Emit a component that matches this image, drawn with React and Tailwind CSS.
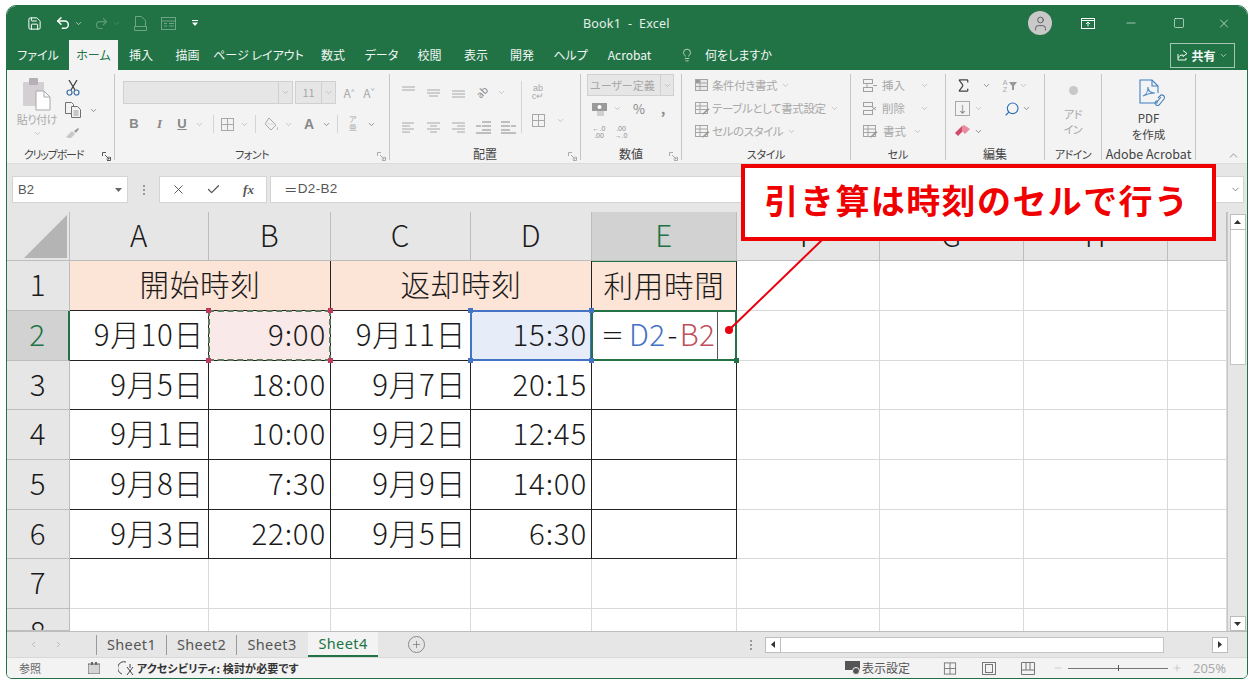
import React from "react";
import clsx from "clsx";
import {
  Save,
  Undo2,
  Redo2,
  ChevronDown,
  ChevronUp,
  Lightbulb,
  X,
  Check,
  Minus,
  Square,
  Search,
  Sigma,
  User,
  ChevronLeft,
  ChevronRight,
  Plus,
} from "lucide-react";

const jp = "font-['Noto_Sans_CJK_JP','Noto_Sans',sans-serif]";
const palt = "[font-feature-settings:'palt']";

const Chev = ({ className }) => (
  <ChevronDown size={9} strokeWidth={1.6} className={clsx("shrink-0", className)} />
);

// small ribbon drawings
const Lines = ({ rows, className }) => (
  <svg width="16" height="14" viewBox="0 0 16 14" stroke="currentColor" fill="none" className={className}>
    {rows.map(([x1, x2, y], i) => (
      <path key={i} d={`M${x1} ${y}H${x2}`} />
    ))}
  </svg>
);

const Paste = () => (
  <svg width="28" height="33" viewBox="0 0 28 33">
    <rect x="0" y="4" width="21" height="24" rx="1" fill="#d3cfd3" />
    <rect x="6" y="0" width="9" height="7" rx="1" fill="#b5b0b5" />
    <path d="M13 13h8l6 6v13H13z" fill="#fff" stroke="#a8a8a8" />
    <path d="M21 13v6h6" fill="none" stroke="#a8a8a8" />
  </svg>
);

const Cut = () => (
  <svg width="14" height="16" viewBox="0 0 14 16" fill="none">
    <path d="M3 0l6 10M11 0L5 10" stroke="#444" strokeWidth="1.300" />
    <circle cx="3.500" cy="12.500" r="2.500" stroke="#3a6ea5" strokeWidth="1.200" />
    <circle cx="10.500" cy="12.500" r="2.500" stroke="#3a6ea5" strokeWidth="1.200" />
  </svg>
);

const CopyDocs = () => (
  <svg width="16" height="16" viewBox="0 0 16 16" fill="#f3f3f3" stroke="#707070">
    <path d="M.5 .5h6l2 2v9h-8z" />
    <path d="M6.500 4.500h6l3 3v8h-9z" />
    <path d="M8.500 9h5M8.500 11h5M8.500 13h5" stroke="#9a9a9a" />
  </svg>
);

const Brush = () => (
  <svg width="14" height="12" viewBox="0 0 14 12">
    <path d="M0 10l6-6 3 3-4 4H2z" fill="#c8c8c8" />
    <path d="M8 4l4-3 1 1-3 4z" fill="#9a9a9a" />
  </svg>
);

const TableIcon = ({ className }) => (
  <svg width="15" height="15" viewBox="0 0 15 15" fill="none" stroke="currentColor" className={className}>
    <rect x="1.500" y="1.500" width="12" height="12" />
    <path d="M7.500 1.500v12M1.500 7.500h12" />
  </svg>
);

const Bucket = () => (
  <svg width="16" height="15" viewBox="0 0 16 15" fill="none" stroke="#a8a8a8">
    <path d="M6 1l7 7-5 5-6-6z" />
    <path d="M2 7h11" stroke="#d8d8d8" />
    <path d="M14.500 10v3" stroke="#c4c4c4" />
  </svg>
);

const Sheetish = ({ cross }) => (
  <svg width="15" height="15" viewBox="0 0 15 15" fill="none" stroke="#a0a0a0">
    <rect x="1.500" y="1.500" width="9" height="4" />
    <rect x="1.500" y="9.500" width="9" height="4" />
    <path d={cross ? "M10 6l4 3m0-3l-4 3" : "M5 5.500v4M11 7.500h4"} />
  </svg>
);

const StyleIcon = ({ kind }) => (
  <svg width="16" height="15" viewBox="0 0 16 15" fill="none" stroke="#a4a4a4">
    <rect x="1.500" y="1.500" width="12" height="11" fill={kind === 0 ? "#e8e8e8" : "#f3f3f3"} />
    <path d="M1.500 5h12M1.500 8.500h12M6 1.500v11" />
    {kind > 0 && <path d="M8 13l6-6 1.500 1.500-6 5z" fill="#9a9a9a" stroke="none" />}
    {kind === 0 && <rect x="2" y="2" width="4" height="3" fill="#9a9a9a" stroke="none" />}
  </svg>
);

const PdfIcon = () => (
  <svg width="28" height="29" viewBox="0 0 28 29" fill="none" stroke="#3f7fc4" strokeWidth="1.100">
    <path d="M19 21v3H2V1h12l6 6v7" />
    <path d="M14 1v6h6" />
    <path d="M5 17c3-1 5-5 5-9 0 4 2 6 7 6-4 0-8 1-12 3z" stroke="#5a8fc8" />
    <path d="M18 22l-1 2a2.500 2.500 0 0 0 4 2l5-6a2.500 2.500 0 0 0-4-3l-2 2" stroke="#4a7fb8" />
    <path d="M19 23l4-5" stroke="#4a7fb8" />
  </svg>
);

const RowIcon = ({ children, className }) => (
  <div className={clsx("flex items-center justify-center shrink-0", className)}>{children}</div>
);

const Launcher = ({ dark }) => (
  <svg width="9" height="9" viewBox="0 0 9 9" fill="none" stroke={dark ? "#555" : "#aaa"} className="absolute right-[3px] top-[4px]">
    <path d="M0.500 4V0.500H4M8.500 5v3.500H5M3 3l4 4M7 4.500V7H4.500" />
  </svg>
);

const Group = ({ label, launcher, dark, className, labelClass, children }) => (
  <div className={clsx("flex flex-col h-[86px] border-r border-[#c6c6c6] shrink-0", className)}>
    <div className="h-[74px] shrink-0">{children}</div>
    <div className={clsx("relative h-[16px] flex items-center justify-center leading-none text-[#444] whitespace-nowrap", palt, labelClass)}>
      {label}
      {launcher && <Launcher dark={dark} />}
    </div>
  </div>
);

const tabs = [
  { t: "ファイル", w: "w-[62px]" },
  { t: "ホーム", w: "w-[49px]", active: true },
  { t: "挿入", w: "w-[46px]" },
  { t: "描画", w: "w-[47px]" },
  { t: "ページ レイアウト", w: "w-[95px]" },
  { t: "数式", w: "w-[54px]" },
  { t: "データ", w: "w-[43px]" },
  { t: "校閲", w: "w-[53px]" },
  { t: "表示", w: "w-[40px]" },
  { t: "開発", w: "w-[52px]" },
  { t: "ヘルプ", w: "w-[45px]" },
  { t: "Acrobat", w: "w-[73px]" },
];

const TitleBar = () => (
  <div className="relative h-[34px] shrink-0 flex items-center bg-[#217346] text-white">
    <RowIcon className="w-[21px] ml-[17px]"><Save size={15} strokeWidth={1.6} /></RowIcon>
    <RowIcon className="w-[20px] ml-[8px]"><Undo2 size={16} strokeWidth={2.2} /></RowIcon>
    <RowIcon className="w-[10px]"><Chev /></RowIcon>
    <RowIcon className="w-[18px] ml-[9px] text-[#5d9a78]"><Redo2 size={15} strokeWidth={1.8} /></RowIcon>
    <RowIcon className="w-[10px] ml-[1px] text-[#5d9a78]"><Chev /></RowIcon>
    <RowIcon className="w-[16px] ml-[11px] text-[#6ea586]">
      <svg width="13" height="15" viewBox="0 0 13 15" fill="none" stroke="currentColor"><path d="M1.500 10V.5h6l4 4V10M.5 10.500h12v4H.5z" /></svg>
    </RowIcon>
    <RowIcon className="w-[16px] ml-[12px] text-[#6ea586]">
      <svg width="15" height="13" viewBox="0 0 15 13" fill="none" stroke="currentColor"><rect x=".5" y=".5" width="14" height="12" /><path d="M.5 4h14M3 6.500h3M8 6.500h5M3 9h3M8 9h5" /></svg>
    </RowIcon>
    <RowIcon className="w-[6px] ml-[16px]">
      <svg width="6" height="6" viewBox="0 0 6 6" fill="currentColor"><path d="M0 0h6v1H0zM0 2.500h6L3 6z" /></svg>
    </RowIcon>
    <div className="absolute left-[576px] top-[12px] text-[12.500px] leading-none tracking-[0.2px] text-[#e4efe9] font-['Noto_Sans',sans-serif] whitespace-pre">Book1  -  Excel</div>
    <div className="ml-auto flex items-center">
      <div className="w-[24px] h-[24px] rounded-full bg-[#c9c9c9] flex items-center justify-center text-[#555]"><User size={17} strokeWidth={1.3} /></div>
      <RowIcon className="w-[14px] ml-[29px]">
        <svg width="14" height="11" viewBox="0 0 14 11" fill="none" stroke="currentColor"><rect x=".5" y=".5" width="13" height="10" /><path d="M.5 2.500h13" /><path d="M7 8.500V4M5 6l2-2 2 2" /></svg>
      </RowIcon>
      <RowIcon className="w-[14px] ml-[29px]"><Minus size={14} strokeWidth={1} /></RowIcon>
      <RowIcon className="w-[12px] ml-[35px]"><Square size={12} strokeWidth={1.2} /></RowIcon>
      <RowIcon className="w-[14px] ml-[32px] mr-[16px]"><X size={15} strokeWidth={1.1} /></RowIcon>
    </div>
  </div>
);

const TabBar = () => (
  <div className={clsx("h-[30px] shrink-0 flex items-stretch bg-[#217346] text-[#f2f7f4] text-[12px] leading-none", jp, palt)}>
    {tabs.map((tab) => (
      <div
        key={tab.t}
        className={clsx(
          "flex items-center justify-center shrink-0 whitespace-nowrap",
          tab.w,
          tab.active && "bg-[#f3f3f3] text-[#217346]"
        )}
      >
        {tab.t}
      </div>
    ))}
    <RowIcon className="w-[14px] ml-[14px]"><Lightbulb size={16} strokeWidth={1.2} /></RowIcon>
    <div className="ml-[11px] flex items-center whitespace-nowrap">何をしますか</div>
    <div className="ml-auto mr-[12px] mt-[3px] mb-[2px] w-[65px] border border-[#a7c7b5] flex items-center justify-center gap-[3px] font-bold">
      <svg width="11" height="11" viewBox="0 0 11 11" fill="none" stroke="currentColor"><path d="M6 .5l4 3-4 3V5C3 5 2 6 1.500 8M1 4v6h8V8" /></svg>
      <span>共有</span>
      <Chev />
    </div>
  </div>
);

const Ribbon = () => (
  <div className={clsx("h-[93px] shrink-0 pt-[4px] flex bg-[#f3f3f3] text-[#a8a8a8]", jp)}>
    <Group label="クリップボード" launcher dark className="w-[108px]" labelClass="text-[11px] tracking-[-1.200px] pr-[14px]">
      <div className="flex">
        <div className="w-[56px] pl-[4px] pt-[4px] flex flex-col items-center">
          <Paste />
          <div className={clsx("mt-[1px] text-[11px] leading-[14px] tracking-[-0.4px] text-[#aaa]", palt)}>貼り付け</div>
          <Chev className="mt-[3px]" />
        </div>
        <div className="flex flex-col">
          <RowIcon className="w-[20px] h-[25px] pt-[3px]"><Cut /></RowIcon>
          <div className="flex items-center h-[22px]">
            <RowIcon className="w-[20px]"><CopyDocs /></RowIcon>
            <Chev className="ml-[6px] text-[#555]" />
          </div>
          <RowIcon className="w-[20px] h-[24px]"><Brush /></RowIcon>
        </div>
      </div>
    </Group>

    <Group label="フォント" launcher className="w-[275px]" labelClass="text-[11px] tracking-[-0.5px]">
      <div className="pt-[7px] pl-[8px]">
        <div className="flex items-center h-[23px]">
          <div className="w-[156px] h-[23px] bg-[#e6e6e6] border border-[#d0d0d0]" />
          <div className="w-[14px] h-[23px] bg-[#e6e6e6] border border-[#d0d0d0] border-l-0 flex items-center justify-center"><Chev /></div>
          <div className="w-[27px] h-[23px] ml-[2px] bg-[#e6e6e6] border border-[#d0d0d0] text-[11px] flex items-center justify-center">11</div>
          <div className="w-[14px] h-[23px] bg-[#e6e6e6] border border-[#d0d0d0] border-l-0 flex items-center justify-center"><Chev /></div>
          <div className="ml-[3px] w-[20px] text-center text-[12px]">A<sup className="text-[7px]">^</sup></div>
          <div className="w-[20px] text-center text-[12px]">A<sup className="text-[7px]">ˇ</sup></div>
        </div>
        <div className="mt-[8px] flex items-center h-[24px] font-['Liberation_Sans',sans-serif] text-[13px] font-bold">
          <div className="w-[20px] ml-[1px] text-center text-[#888]">B</div>
          <div className="w-[25px] ml-[3px] text-center italic font-['Liberation_Serif',serif] text-[#888]">I</div>
          <div className="w-[20px] text-center underline text-[#888]">U</div>
          <Chev className="ml-[3px]" />
          <div className="ml-[9px] w-px h-[18px] bg-[#d4d4d4]" />
          <RowIcon className="w-[20px] ml-[3px]"><TableIcon /></RowIcon>
          <Chev className="ml-[3px]" />
          <div className="ml-[6px] w-px h-[18px] bg-[#d4d4d4]" />
          <RowIcon className="w-[18px] ml-[6px]"><Bucket /></RowIcon>
          <Chev className="ml-[4px]" />
          <div className="w-[16px] ml-[8px] text-center text-[14px] text-[#888]">A</div>
          <Chev className="ml-[5px] text-[#555]" />
          <div className="ml-[6px] w-px h-[18px] bg-[#d4d4d4]" />
          <div className="w-[20px] ml-[5px] text-center text-[8px] leading-[8px] font-normal">ア<br />亜</div>
          <Chev className="ml-[4px] text-[#555]" />
        </div>
      </div>
    </Group>

    <Group label="配置" launcher className="w-[191px]" labelClass="text-[12px]">
      <div className="pt-[7px] flex">
        <div className="w-[131px] pl-[11px]">
          <div className="flex items-center h-[22px] gap-[9px]">
            <Lines rows={[[1, 14, 2], [1, 14, 5]]} />
            <Lines rows={[[1, 14, 5], [1, 14, 8], [3, 12, 11]]} />
            <Lines rows={[[1, 14, 6], [1, 14, 9], [1, 14, 12]]} />
            <div className="-rotate-45 text-[10px] leading-none text-[#888]">ab</div>
            <Chev />
          </div>
          <div className="mt-[12px] flex items-center h-[24px] gap-[9px]">
            <Lines rows={[[1, 13, 3], [1, 9, 6], [1, 13, 9], [1, 9, 12]]} />
            <Lines rows={[[1, 14, 3], [4, 11, 6], [1, 14, 9], [4, 11, 12]]} />
            <Lines rows={[[1, 14, 3], [6, 14, 6], [1, 14, 9], [6, 14, 12]]} />
            <Lines className="text-[#8a8a8a]" rows={[[6, 15, 2], [6, 15, 6], [6, 15, 10], [0, 5, 6], [0, 15, 13]]} />
            <Lines className="text-[#8a8a8a]" rows={[[0, 9, 2], [0, 9, 6], [0, 9, 10], [10, 15, 6], [0, 15, 13]]} />
          </div>
        </div>
        <div className="border-l border-[#d4d4d4] h-[52px] pl-[6px] pt-[3px]">
          <div className="w-[20px] text-center text-[9px] leading-[8px] font-['Liberation_Sans',sans-serif]">ab<br />c↵</div>
          <div className="mt-[13px] flex items-center gap-[8px]">
            <RowIcon className="w-[20px]"><TableIcon /></RowIcon>
            <Chev />
          </div>
        </div>
      </div>
    </Group>

    <Group label="数値" launcher className="w-[101px]" labelClass="text-[12px]">
      <div className="pl-[6px]">
        <div className="flex h-[22px] w-[87px] bg-[#e6e6e6] border border-[#d0d0d0]">
          <div className={clsx("flex-1 pl-[2px] text-[11px] leading-[20px] text-[#a8a8a8]", palt)}>ユーザー定義</div>
          <div className="w-[13px] border-l border-[#d0d0d0] flex items-center justify-center"><Chev /></div>
        </div>
        <div className="mt-[1px] flex items-center h-[23px]">
          <RowIcon className="w-[18px] ml-[3px]">
            <svg width="15" height="14" viewBox="0 0 15 14"><rect x="0" y="1" width="15" height="8" fill="#9a9a9a" /><circle cx="7.500" cy="5" r="2" fill="#fff" /><rect x="5" y="9" width="7" height="5" fill="#d0d0d0" /></svg>
          </RowIcon>
          <Chev className="ml-[5px]" />
          <div className="w-[20px] ml-[7px] text-center text-[13px] text-[#888] leading-none">%</div>
          <div className="w-[14px] ml-[7px] text-center text-[13px] font-bold text-[#888] leading-none">,</div>
        </div>
        <div className="flex items-center h-[23px] text-[7px] leading-[7px] font-['Liberation_Sans',sans-serif] text-[#8a8a8a]">
          <div className="w-[18px] ml-[3px] text-center">←.0<br />.00</div>
          <div className="w-[20px] ml-[3px] text-center">.00<br />→.0</div>
        </div>
      </div>
    </Group>

    <Group label="スタイル" className="w-[169px]" labelClass="text-[11px] tracking-[-0.3px]">
      <div className={clsx("pl-[12px] text-[11.500px] tracking-[-0.4px] leading-none", palt)}>
        {["条件付き書式", "テーブルとして書式設定", "セルのスタイル"].map((t, i) => (
          <div key={t} className="flex items-center h-[23px] whitespace-nowrap">
            <StyleIcon kind={i} />
            <span className="ml-[2px]">{t}</span>
            <Chev className="ml-[4px]" />
          </div>
        ))}
      </div>
    </Group>

    <Group label="セル" className="w-[95px]" labelClass="text-[11px]">
      <div className={clsx("pl-[11px] text-[11.500px] leading-none", palt)}>
        {["挿入", "削除", "書式"].map((t, i) => (
          <div key={t} className="flex items-center h-[23px] whitespace-nowrap">
            {i < 2 ? <Sheetish cross={i === 1} /> : <StyleIcon kind={1} />}
            <span className="ml-[5px] w-[28px]">{t}</span>
            <Chev className={i < 2 ? "ml-[10px]" : "ml-[2px]"} />
          </div>
        ))}
      </div>
    </Group>

    <Group label="編集" className="w-[99px]" labelClass="text-[12px]">
      <div className="pl-[9px]">
        <div className="flex items-center h-[23px]">
          <Sigma size={17} strokeWidth={1.7} className="text-[#444]" />
          <Chev className="ml-[10px] text-[#555]" />
          <div className="w-[8px] ml-[10px] text-center text-[7px] leading-[7px] font-['Liberation_Sans',sans-serif]">A<br />Z</div>
          <svg width="8" height="8" viewBox="0 0 8 8" className="fill-[#999]"><path d="M0 0h8L5 4v4H3V4z" /></svg>
          <Chev className="ml-[2px]" />
        </div>
        <div className="flex items-center h-[23px]">
          <RowIcon className="w-[15px] h-[15px] border border-[#a8a8a8] text-[#777] text-[10px] leading-none">↓</RowIcon>
          <Chev className="ml-[4px]" />
          <Search size={16} strokeWidth={1.7} className="ml-[21px] -scale-x-100 text-[#2f6fb5]" />
          <Chev className="ml-[2px] text-[#555]" />
        </div>
        <div className="flex items-center h-[23px]">
          <svg width="16" height="13" viewBox="0 0 16 13"><path d="M0 8l7-7 3 3-7 7z" fill="#d24a6a" /><path d="M7 1l2-1 6 4-5 5-3-3z" fill="#e88aa0" /></svg>
          <Chev className="ml-[3px] text-[#555]" />
        </div>
      </div>
    </Group>

    <Group label="アドイン" className="w-[57px]" labelClass="text-[11px] tracking-[-0.5px]">
      <div className={clsx("flex flex-col items-center text-[11px] leading-[15px] tracking-[-0.5px]", palt)}>
        <div className="mt-[12px] w-[9px] h-[9px] rounded-full bg-[#c8c8c8]" />
        <div className="mt-[12px]">アド</div>
        <div>イン</div>
      </div>
    </Group>

    <Group label="Adobe Acrobat" className="w-[94px]" labelClass="text-[12.500px]">
      <div className={clsx("flex flex-col items-center text-[11.500px] leading-[16px] text-[#444]", palt)}>
        <div className="mt-[5px] ml-[6px]"><PdfIcon /></div>
        <div className="mt-[2px]">PDF</div>
        <div>を作成</div>
      </div>
    </Group>

    <div className="flex-1 flex items-end justify-end pr-[7px] pb-[1px] text-[#666]">
      <ChevronUp size={13} strokeWidth={1.2} />
    </div>
  </div>
);

const FormulaBar = () => (
  <div className="h-[49px] shrink-0 pt-[12px] flex bg-[#e6e6e6] text-[#555] font-['Liberation_Sans',sans-serif] border-t border-[#dcdcdc]">
    <div className="ml-[5px] w-[116px] h-[27px] bg-white border border-[#d4d4d4] flex items-center pl-[5px] text-[13px]">
      B2
      <svg width="7" height="4" viewBox="0 0 7 4" className="ml-auto mr-[5px] fill-[#666]"><path d="M0 0h7L3.500 4z" /></svg>
    </div>
    <div className="w-[31px] h-[27px] flex flex-col items-center justify-center gap-[2px]">
      <div className="w-[2px] h-[2px] bg-[#999]" />
      <div className="w-[2px] h-[2px] bg-[#999]" />
      <div className="w-[2px] h-[2px] bg-[#999]" />
    </div>
    <div className="w-[108px] h-[27px] bg-white border border-[#d4d4d4] flex items-center">
      <RowIcon className="w-[36px]"><X size={15} strokeWidth={1.5} /></RowIcon>
      <RowIcon className="w-[35px]"><Check size={15} strokeWidth={2} /></RowIcon>
      <div className="w-[35px] text-center italic font-bold text-[13px] font-['Liberation_Serif',serif]">fx</div>
    </div>
    <div className="ml-[3px] flex-1 mr-[3px] h-[27px] bg-white border border-[#d4d4d4] flex items-center pl-[13px] text-[13.500px] tracking-[0.3px]">
      <span className={jp}>＝</span>D2-B2
      <ChevronDown size={11} strokeWidth={1.5} className="ml-auto mr-[2px]" />
    </div>
  </div>
);

const columns = ["A", "B", "C", "D", "E", "F", "G", "H", ""];

const dataRows = [
  ["9月10日", "9:00", "9月11日", "15:30"],
  ["9月5日", "18:00", "9月7日", "20:15"],
  ["9月1日", "10:00", "9月2日", "12:45"],
  ["9月8日", "7:30", "9月9日", "14:00"],
  ["9月3日", "22:00", "9月5日", "6:30"],
];

const black = "border-r border-b border-[#222]";
const pale = "border-r border-b border-[#d9d9d9]";
const headCell = "flex items-center justify-center bg-[#e6e6e6] border-r border-b border-[#bdbdbd] text-[#1a1a1a] leading-none pb-[3px]";
const peach = "flex items-center justify-center bg-[#fce4d6] text-[#1a1a1a] leading-none pb-[3px]";
const dataCell = "flex items-center justify-end pr-[4px] pb-[3px] text-[#1a1a1a] leading-none";

const Handles = ({ color }) =>
  ["-left-[3px] -top-[3px]", "-right-[3px] -top-[3px]", "-left-[3px] -bottom-[3px]", "-right-[3px] -bottom-[3px]"].map((pos) => (
    <div key={pos} className={clsx("absolute w-[5px] h-[5px] z-10", pos, color)} />
  ));

const Sheet = () => (
  <div className="h-[419px] shrink-0 flex bg-white">
    <div className={clsx("flex-1 grid grid-cols-[63px_139px_122px_140px_121px_145px_143px_144px_144px_59px] grid-rows-[49px_50px_50px_49px_50px_50px_49px_50px_22px] text-[29.500px] tracking-[0.8px] font-light", jp)}>
      <div className="bg-[#e6e6e6] border-r border-b border-[#bdbdbd] flex items-end justify-end p-[2px]">
        <div className="w-0 h-0 border-b-[43px] border-l-[43px] border-b-[#b4b4b4] border-l-transparent" />
      </div>
      {columns.map((c, i) => (
        <div key={i} className={clsx(headCell, c === "E" && "!bg-[#d2d2d2] !text-[#217346]")}>{c}</div>
      ))}

      <div className={headCell}>1</div>
      <div className={clsx(peach, "col-span-2", black)}>開始時刻</div>
      <div className={clsx(peach, "col-span-2", black)}>返却時刻</div>
      <div className={clsx(peach, black, "border-t border-t-[#217346]")}>利用時間</div>
      {[0, 1, 2, 3].map((i) => <div key={i} className={pale} />)}

      {dataRows.map((row, r) => (
        <React.Fragment key={r}>
          <div className={clsx(headCell, r === 0 && "!bg-[#d2d2d2] !text-[#217346] border-r-2 border-r-[#217346]")}>{r + 2}</div>
          {row.map((v, c) => {
            if (r === 0 && c === 1) {
              return (
                <div key={c} className={clsx(dataCell, black, "relative bg-[#f9e9e9]")}>
                  <div className="absolute -inset-px border-2 border-dashed border-[#5f7a5f]" />
                  <Handles color="bg-[#c0395a]" />
                  {v}
                </div>
              );
            }
            if (r === 0 && c === 3) {
              return (
                <div key={c} className={clsx(dataCell, black, "relative bg-[#e6edf9]")}>
                  <div className="absolute -inset-px border-2 border-[#4472c4]" />
                  <Handles color="bg-[#4472c4]" />
                  {v}
                </div>
              );
            }
            return <div key={c} className={clsx(dataCell, black)}>{v}</div>;
          })}
          {r === 0 ? (
            <div className="relative flex items-center pl-[9px] pb-[3px] leading-none text-[#1a1a1a] tracking-[0.4px] whitespace-nowrap border-r border-b border-[#222]">
              <div className="absolute -inset-px border-2 border-[#217346]" />
              <div className="absolute -right-[3px] -bottom-[3px] w-[5px] h-[5px] bg-[#217346] z-10" />
              <div className="absolute right-[18px] top-0 bottom-0 w-px bg-[#555]" />
              <span className="w-[28px] text-[23px] shrink-0">＝</span>
              <span className="text-[#4472c4]">D2</span>
              <span className="mx-[2px]">-</span>
              <span className="text-[#c0505a]">B2</span>
            </div>
          ) : (
            <div className={black} />
          )}
          {[0, 1, 2, 3].map((i) => <div key={i} className={pale} />)}
        </React.Fragment>
      ))}

      <div className={headCell}>7</div>
      {columns.map((c, i) => <div key={i} className={pale} />)}
      <div className={clsx(headCell, "!items-start overflow-hidden pt-[7px]")}>8</div>
      {columns.map((c, i) => <div key={i} className="border-r border-[#d9d9d9]" />)}
    </div>
    <div className="w-[20px] bg-[#e6e6e6] flex flex-col items-center pt-[2px] pb-[0px] border-l border-[#c8c8c8]">
      <div className="w-[16px] h-[16px] bg-white border border-[#bdbdbd] flex items-center justify-center">
        <svg width="7" height="4" viewBox="0 0 7 4" className="fill-[#333]"><path d="M0 4h7L3.500 0z" /></svg>
      </div>
      <div className="w-[16px] h-[135px] bg-white border border-t-0 border-[#c4c4c4]" />
      <div className="mt-auto w-[16px] h-[15px] bg-white border border-[#bdbdbd] flex items-center justify-center">
        <svg width="7" height="4" viewBox="0 0 7 4" className="fill-[#333]"><path d="M0 0h7L3.500 4z" /></svg>
      </div>
    </div>
  </div>
);

const SheetTabs = () => (
  <div className="h-[26px] shrink-0 flex items-center bg-[#e6e6e6] border-t border-[#bdbdbd] text-[14.500px] tracking-[0.4px] leading-none text-[#555] font-['Noto_Sans',sans-serif]">
    <ChevronLeft size={9} strokeWidth={2} className="ml-[22px] text-[#aaa]" />
    <ChevronRight size={9} strokeWidth={2} className="ml-[16px] text-[#aaa]" />
    <div className="ml-[33px] w-px h-[20px] bg-[#9a9a9a]" />
    {["Sheet1", "Sheet2", "Sheet3"].map((s, i) => (
      <div key={s} className={clsx("w-[70px] h-[20px] flex items-center justify-center", i < 2 && "border-r border-[#9a9a9a]")}>{s}</div>
    ))}
    <div className="ml-[1px] w-[70px] h-[25px] -mt-px flex items-center justify-center bg-[#f3f3f3] text-[#217346] border-b-2 border-[#217346]">Sheet4</div>
    <div className="ml-[30px] w-[17px] h-[17px] rounded-full border border-[#8a8a8a] flex items-center justify-center"><Plus size={11} strokeWidth={1.2} /></div>
    <div className="ml-[325px] flex flex-col gap-[2px]">
      <div className="w-[2px] h-[2px] bg-[#999]" />
      <div className="w-[2px] h-[2px] bg-[#999]" />
      <div className="w-[2px] h-[2px] bg-[#999]" />
    </div>
    <div className="ml-[13px] h-[16px] flex w-[463px]">
      <div className="w-[16px] bg-white border border-[#bdbdbd] flex items-center justify-center">
        <svg width="4" height="7" viewBox="0 0 4 7" className="fill-[#333]"><path d="M4 0v7L0 3.500z" /></svg>
      </div>
      <div className="w-[383px] bg-white border border-l-0 border-[#c4c4c4]" />
      <div className="ml-auto w-[16px] bg-white border border-[#bdbdbd] flex items-center justify-center">
        <svg width="4" height="7" viewBox="0 0 4 7" className="fill-[#333]"><path d="M0 0v7l4-3.500z" /></svg>
      </div>
    </div>
  </div>
);

const StatusBar = () => (
  <div className={clsx("h-[21px] shrink-0 flex items-center bg-[#f3f3f3] text-[11px] leading-none text-[#555] border-t border-[#d8d8d8]", jp, palt)}>
    <span className="ml-[12px] w-[24px] text-[#666]">参照</span>
    <svg width="12" height="12" viewBox="0 0 12 12" className="ml-[45px]" fill="#666"><rect y="2" width="12" height="10" fill="#d4d4d4" stroke="#666" /><rect x="3" width="2" height="3" /><rect x="7" width="2" height="3" /></svg>
    <svg width="17" height="15" viewBox="0 0 17 15" fill="none" stroke="#444" className="ml-[18px]"><path d="M4 13A6 6 0 0 1 8 1" /><path d="M9 6l6 8M15 6l-6 8M12 3v4" /></svg>
    <span className="ml-[2px] font-bold text-[#333] whitespace-nowrap tracking-[0.15px]">アクセシビリティ: 検討が必要です</span>
    <svg width="16" height="14" viewBox="0 0 16 14" className="ml-auto"><rect width="15" height="9" fill="#555" /><circle cx="11" cy="10" r="3.500" fill="#555" stroke="#f3f3f3" /></svg>
    <span className="ml-[1px] w-[50px] text-[12px] whitespace-nowrap">表示設定</span>
    <RowIcon className="w-[14px] ml-[31px] text-[#777]"><TableIcon /></RowIcon>
    <RowIcon className="w-[14px] ml-[25px]"><svg width="14" height="13" viewBox="0 0 14 13" fill="none" stroke="#777"><rect x=".5" y=".5" width="13" height="12" /><rect x="3.500" y="2.500" width="7" height="8" /></svg></RowIcon>
    <RowIcon className="w-[14px] ml-[25px]"><svg width="14" height="13" viewBox="0 0 14 13" fill="none" stroke="#777"><path d="M.5.500h13v12H.5zM.5 8h13M5 .5V8M9 .5V8" /></svg></RowIcon>
    <Minus size={10} strokeWidth={1} className="ml-[18px] text-[#999]" />
    <div className="ml-[5px] w-[100px] h-px bg-[#777] flex justify-center items-center"><div className="w-px h-[6px] bg-[#555]" /></div>
    <Plus size={10} strokeWidth={1} className="ml-[4px] text-[#999]" />
    <span className="ml-[11px] mr-[20px] w-[34px] text-[13px] text-[#aaa] font-['Noto_Sans',sans-serif]">205%</span>
  </div>
);

export default function App() {
  return (
    <div className="w-[1254px] h-[686px] pt-[5px] pl-[6px] bg-white overflow-hidden">
      <div className="relative w-[1242px] h-[674px] flex flex-col border border-[#217346] rounded-t-[10px] rounded-b-[6px] overflow-hidden">
        <TitleBar />
        <TabBar />
        <Ribbon />
        <FormulaBar />
        <Sheet />
        <SheetTabs />
        <StatusBar />

        {/* callout over the sheet */}
        <div className={clsx("absolute left-[734px] top-[158px] w-[475px] h-[77px] bg-white border-[4px] border-[#f00000] flex items-center justify-center pb-[6px] pr-[3px] text-[34px] font-bold text-[#f00000] leading-none tracking-[1.4px] whitespace-nowrap", jp)}>
          引き算は時刻のセルで行う
        </div>
        <svg className="absolute left-[715px] top-[234px]" width="110" height="100" viewBox="0 0 110 100">
          <path d="M100 0L7 90" stroke="#e8000f" strokeWidth="2" fill="none" />
          <circle cx="7" cy="90" r="4" fill="#e8000f" />
        </svg>
      </div>
    </div>
  );
}
